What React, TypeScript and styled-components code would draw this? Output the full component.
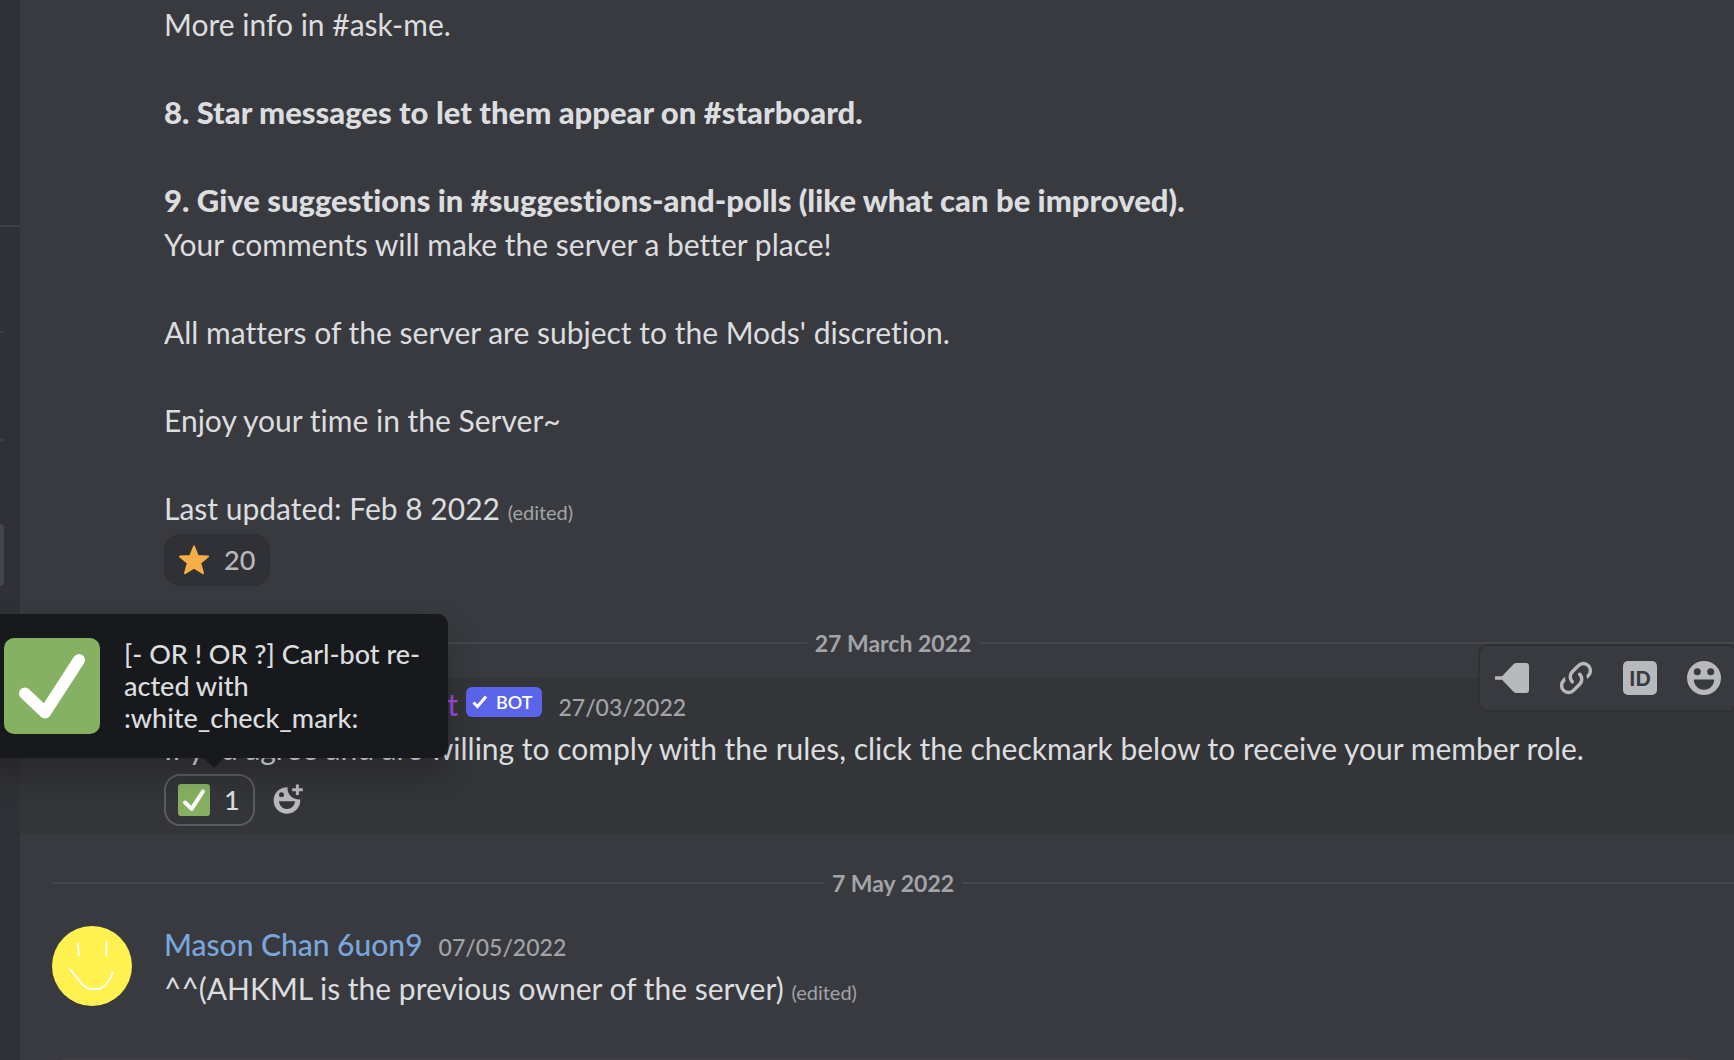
import React from "react";
import styled, { createGlobalStyle } from "styled-components";

const color = {
  chat: "#393a3f",
  hover: "#343539",
  sidebar: "#303136",
  floating: "#18191c",
  line: "#44464c",
  text: "#dcdddf",
  muted: "#a3a4a8",
  icon: "#b8b9bd",
  blurple: "#5b65ea",
};

const GlobalStyle = createGlobalStyle`
  *, *::before, *::after { box-sizing: border-box; }
  body {
    margin: 0;
    background: ${color.chat};
    color: ${color.text};
    font-family: Lato, "Noto Sans", sans-serif;
    font-size: 30px;
    font-variant-ligatures: none;
    line-height: 44px;
  }
  button { font: inherit; color: inherit; cursor: pointer; }
  svg { display: block; flex: none; }
`;

const Page = styled.div`
  display: flex;
  height: 100vh;
  overflow: hidden;
`;

const Sidebar = styled.nav`
  display: flex;
  flex: none;
  flex-direction: column;
  width: 20px;
  padding-top: 225px;
  background: ${color.sidebar};
`;

const SidebarRule = styled.hr<{ $full?: boolean }>`
  flex: none;
  width: ${(p) => (p.$full ? "100%" : "4px")};
  height: 2px;
  margin: 0 0 ${(p) => (p.$full ? "104px" : "106px")};
  border: 0;
  background: #3e3f44;
`;

const SelectedChannel = styled.div`
  width: 4px;
  height: 62px;
  margin-top: -23px;
  border-radius: 0 4px 4px 0;
  background: #43454b;
`;

const Chat = styled.main`
  display: flex;
  flex: 1;
  flex-direction: column;
  min-width: 0;
  padding-top: 2px;
`;

const MessageRow = styled.article<{ $hovered?: boolean; $first?: boolean }>`
  position: relative;
  display: grid;
  grid-template-columns: 80px 1fr;
  column-gap: 32px;
  padding: ${(p) => (p.$first ? "0" : "4px")} 32px 8px;
  background: ${(p) => (p.$hovered ? color.hover : "transparent")};
`;

const Body = styled.div`
  grid-column: 2;
  min-width: 0;
`;

const Line = styled.p`
  min-height: 44px;
  margin: 0;
`;

const Strong = styled.strong`
  font-size: 31px;
  font-weight: 900;
  line-height: 40px;
`;

const Edited = styled.span`
  color: ${color.muted};
  font-size: 20px;
  line-height: 24px;
`;

const Header = styled.header`
  display: flex;
  align-items: baseline;
  height: 44px;
`;

const Author = styled.span<{ $color: string; $bot?: boolean }>`
  min-width: ${(p) => (p.$bot ? "294px" : "0")};
  color: ${(p) => p.$color};
  font-weight: 500;
  text-align: right;
  white-space: nowrap;
`;

const BotTag = styled.span`
  display: flex;
  align-self: flex-start;
  align-items: center;
  gap: 8px;
  height: 30px;
  margin: 5px 0 0 8px;
  padding: 0 10px 0 6px;
  border-radius: 6px;
  background: ${color.blurple};
  color: #fff;
  font-size: 18px;
  font-weight: 600;
`;

const Time = styled.time`
  margin-left: 16px;
  color: ${color.muted};
  font-size: 23px;
  font-weight: 500;
`;

const Divider = styled.div`
  display: flex;
  align-items: center;
  height: 26px;
  margin: 36px 0 22px 32px;
  color: ${color.muted};
  font-size: 23px;
  font-weight: 700;
  line-height: 26px;

  &::before,
  &::after {
    content: "";
    flex: 1;
    height: 2px;
    background: ${color.line};
  }
`;

const DividerLabel = styled.span`
  padding: 0 8px;
`;

const Reactions = styled.div`
  display: flex;
  align-items: center;
  margin-top: 4px;
`;

const ReactionSlot = styled.div`
  position: relative;
`;

const Reaction = styled.button<{ $hovered?: boolean }>`
  display: flex;
  align-items: center;
  gap: 14px;
  height: 52px;
  padding: 0 13px 0 12px;
  border: 2px solid ${(p) => (p.$hovered ? "#5b5c61" : "#303136")};
  border-radius: 16px;
  background: ${(p) => (p.$hovered ? "transparent" : "#303136")};
  color: ${(p) => (p.$hovered ? color.text : color.icon)};
  font-size: 27px;
  font-weight: 500;
`;

const AddReaction = styled.button`
  display: flex;
  margin-left: 18px;
  padding: 0;
  border: 0;
  background: none;
  color: ${color.icon};
`;

const Tooltip = styled.div`
  position: absolute;
  bottom: calc(100% + 16px);
  left: -184px;
  z-index: 2;
  display: flex;
  gap: 24px;
  width: 468px;
  padding: 24px;
  border-radius: 10px;
  background: ${color.floating};
  box-shadow: 0 16px 32px rgba(0, 0, 0, 0.24);
  font-size: 27px;
  font-weight: 500;
  line-height: 32px;

  &::after {
    content: "";
    position: absolute;
    top: 100%;
    left: 50%;
    margin-left: -10px;
    border: 10px solid transparent;
    border-top-color: ${color.floating};
    border-bottom: 0;
  }
`;

const Actions = styled.div`
  position: absolute;
  top: -34px;
  right: -4px;
  display: flex;
  border: 2px solid #303135;
  border-radius: 10px;
  background: ${color.chat};
`;

const Action = styled.button`
  display: flex;
  align-items: center;
  justify-content: center;
  width: 64px;
  height: 64px;
  padding: 0;
  border: 0;
  background: none;
  color: ${color.icon};
`;

const IdBadge = styled.span`
  display: flex;
  align-items: center;
  justify-content: center;
  width: 34px;
  height: 34px;
  border-radius: 5px;
  background: ${color.icon};
  color: ${color.chat};
  font-size: 20px;
  font-weight: 900;
  line-height: 34px;
`;

const Composer = styled.div`
  flex: none;
  height: 88px;
  margin: 40px 32px 0;
  border-radius: 16px;
  background: #3f3f45;
`;

const CheckEmoji = ({ size }: { size: number }) => (
  <svg width={size} height={size} viewBox="0 0 96 96" aria-hidden="true">
    <rect width="96" height="96" rx="10" fill="#86b162" />
    <path d="M21 55.5 41 74.500 75 22" fill="none" stroke="#fff" strokeWidth="12" strokeLinecap="round" strokeLinejoin="round" />
  </svg>
);

const StarEmoji = () => (
  <svg width="32" height="32" viewBox="0 0 32 32" aria-hidden="true">
    <path
      d="M16 2.500 19.800 12 30 12.600 22.200 19 25 29.200 16 23.600 7 29.200 9.800 19 2 12.600 12.200 12Z"
      fill="#f6ae47"
      stroke="#f6ae47"
      strokeWidth="2"
      strokeLinejoin="round"
    />
  </svg>
);

const AddReactionIcon = () => (
  <svg width="32" height="32" viewBox="0 0 32 32" fill="currentColor" aria-hidden="true">
    <path
      fillRule="evenodd"
      d="M14.500 3.200C14 10 19 15.600 27.200 15.500A13.300 13.300 0 1 1 14.500 3.200ZM8.500 8.200a2.500 2.500 0 1 0 0 5 2.500 2.500 0 0 0 0-5ZM6 17.300C6.500 22 9.600 25 14 25S21.500 22 22 17.300Z"
    />
    <path d="M22.900 .4h3v3.800h3.900v3h-3.900v3.900h-3v-3.900h-3.800v-3h3.800Z" />
  </svg>
);

const TagIcon = () => (
  <svg width="34" height="30" viewBox="0 0 34 30" fill="currentColor" aria-hidden="true">
    <path d="M0 13.300h7L18.500 1.300Q19.700 0 21.500 0H31Q34 0 34 3V27Q34 30 31 30H21.500Q19.700 30 18.500 28.700L7 16.700H0Z" />
  </svg>
);

const LinkIcon = () => (
  <svg width="42" height="42" viewBox="0 0 24 24" fill="currentColor" aria-hidden="true">
    <path d="M10.590 13.410c.41.39.41 1.030 0 1.420-.39.39-1.030.39-1.420 0a5.003 5.003 0 0 1 0-7.070l3.540-3.540a5.003 5.003 0 0 1 7.070 0 5.003 5.003 0 0 1 0 7.070l-1.490 1.490c.01-.82-.12-1.640-.4-2.420l.47-.48a2.982 2.982 0 0 0 0-4.240 2.982 2.982 0 0 0-4.240 0l-3.530 3.530a2.982 2.982 0 0 0 0 4.240m2.820-4.240c.39-.39 1.030-.39 1.420 0a5.003 5.003 0 0 1 0 7.070l-3.540 3.540a5.003 5.003 0 0 1-7.070 0 5.003 5.003 0 0 1 0-7.070l1.490-1.490c-.01.82.12 1.640.4 2.430l-.47.47a2.982 2.982 0 0 0 0 4.240 2.982 2.982 0 0 0 4.240 0l3.530-3.530a2.982 2.982 0 0 0 0-4.240.973.973 0 0 1 0-1.420Z" />
  </svg>
);

const SmileIcon = () => (
  <svg width="34" height="34" viewBox="0 0 34 34" fill="currentColor" aria-hidden="true">
    <path
      fillRule="evenodd"
      d="M17 0a17 17 0 1 0 0 34 17 17 0 0 0 0-34ZM10.300 7.200a3.500 3.500 0 1 1 0 7 3.500 3.500 0 0 1 0-7ZM23.700 7.200a3.500 3.500 0 1 1 0 7 3.500 3.500 0 0 1 0-7ZM6.800 18.500H27.200C27.200 24.500 22.700 28.700 17 28.700S6.800 24.500 6.800 18.500Z"
    />
  </svg>
);

const VerifiedIcon = () => (
  <svg width="16" height="14" viewBox="0 0 16 14" aria-hidden="true">
    <path d="M1.500 7.500 5.500 11.500 14 1.500" fill="none" stroke="#fff" strokeWidth="3" />
  </svg>
);

const Avatar = () => (
  <svg width="80" height="80" viewBox="0 0 80 80" role="img" aria-label="Mason Chan 6uon9">
    <circle cx="40" cy="40" r="40" fill="#fff150" />
    <path
      d="M26 17.300 26.800 29.500M54.400 15.500 54.300 29.500M18 43.300 31 59Q35.500 63 39.500 63H46Q50.500 63 56 55.500 59.500 51.500 60.600 46.300"
      fill="none"
      stroke="#fff"
      strokeWidth="1.800"
      strokeLinecap="round"
    />
  </svg>
);

const AvatarSlot = styled.div`
  padding-top: 4px;
`;

const rules: { text: string; bold?: boolean }[] = [
  { text: "More info in #ask-me." },
  { text: "" },
  { text: "8. Star messages to let them appear on #starboard.", bold: true },
  { text: "" },
  { text: "9. Give suggestions in #suggestions-and-polls (like what can be improved).", bold: true },
  { text: "Your comments will make the server a better place!" },
  { text: "" },
  { text: "All matters of the server are subject to the Mods' discretion." },
  { text: "" },
  { text: "Enjoy your time in the Server~" },
  { text: "" },
];

export default function App() {
  return (
    <>
      <GlobalStyle />
      <Page>
        <Sidebar aria-label="Channels">
          <SidebarRule $full />
          <SidebarRule />
          <SidebarRule />
          <SelectedChannel />
        </Sidebar>
        <Chat>
          <MessageRow $first>
            <Body>
              {rules.map((rule, i) => (
                <Line key={i}>{rule.bold ? <Strong>{rule.text}</Strong> : rule.text}</Line>
              ))}
              <Line>
                Last updated: Feb 8 2022 <Edited>(edited)</Edited>
              </Line>
              <Reactions>
                <Reaction aria-label="star, 20 reactions">
                  <StarEmoji />
                  20
                </Reaction>
              </Reactions>
            </Body>
          </MessageRow>

          <Divider>
            <DividerLabel>27 March 2022</DividerLabel>
          </Divider>

          <MessageRow $hovered>
            <Body>
              <Header>
                <Author $color="#9f48dc" $bot>
                  [- OR ! OR ?] Carl-bot
                </Author>
                <BotTag>
                  <VerifiedIcon />
                  BOT
                </BotTag>
                <Time>27/03/2022</Time>
              </Header>
              <Line>
                If you agree and are willing to comply with the rules, click the checkmark below to receive your member
                role.
              </Line>
              <Reactions>
                <ReactionSlot>
                  <Reaction $hovered aria-describedby="reaction-tip">
                    <CheckEmoji size={32} />1
                  </Reaction>
                  <Tooltip id="reaction-tip" role="tooltip">
                    <CheckEmoji size={96} />
                    <span>[- OR ! OR ?] Carl-bot re&shy;acted with :white_check_mark:</span>
                  </Tooltip>
                </ReactionSlot>
                <AddReaction aria-label="Add reaction">
                  <AddReactionIcon />
                </AddReaction>
              </Reactions>
            </Body>
            <Actions>
              <Action aria-label="Tag">
                <TagIcon />
              </Action>
              <Action aria-label="Copy link">
                <LinkIcon />
              </Action>
              <Action aria-label="Copy ID">
                <IdBadge>ID</IdBadge>
              </Action>
              <Action aria-label="Add reaction">
                <SmileIcon />
              </Action>
            </Actions>
          </MessageRow>

          <Divider>
            <DividerLabel>7 May 2022</DividerLabel>
          </Divider>

          <MessageRow>
            <AvatarSlot>
              <Avatar />
            </AvatarSlot>
            <Body>
              <Header>
                <Author $color="#79a6dc">Mason Chan 6uon9</Author>
                <Time>07/05/2022</Time>
              </Header>
              <Line>
                ^^(AHKML is the previous owner of the server) <Edited>(edited)</Edited>
              </Line>
            </Body>
          </MessageRow>
          <Composer />
        </Chat>
      </Page>
    </>
  );
}
